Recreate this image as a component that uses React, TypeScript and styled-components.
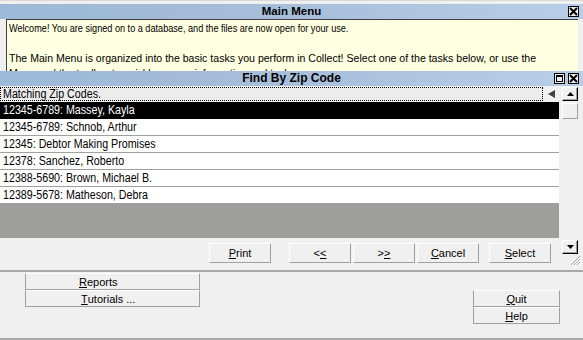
import { FC } from 'react';
import styled, { createGlobalStyle } from 'styled-components';

const GlobalStyle = createGlobalStyle`
    html, body {
        margin: 0;
        padding: 0;
        background: #f0f0f0;
    }
    body {
        font-family: "Liberation Sans", Arial, sans-serif;
        font-size: 11px;
        color: #000;
    }
`;

const Screen = styled.div`
    width: 583px;
    height: 340px;
    overflow: hidden;
    background: #f0f0f0;
    display: flex;
    flex-direction: column;
    padding-top: 3px;
    box-sizing: border-box;
    border-top: 1px solid #d8d8d8;
`;

const TitleBar = styled.div<{ $size?: number }>`
    position: relative;
    height: 15px;
    flex: none;
    background: linear-gradient(90deg, #9cbad8 0%, #a3bbd7 30%, #a9c0dc 55%, #b8cee8 100%);
    display: flex;
    align-items: center;
    justify-content: center;
    font-weight: bold;
    font-size: ${p => p.$size ?? 12}px;
    line-height: 15px;
`;

const TitleButtons = styled.div`
    position: absolute;
    right: 4px;
    top: 2px;
    display: flex;
    gap: 3px;
`;

const WinButton = styled.div`
    width: 11px;
    height: 11px;
    box-sizing: border-box;
    border: 1px solid #000;
    background: #ececec;
    display: flex;
    align-items: center;
    justify-content: center;
`;

const Welcome = styled.div`
    flex: none;
    height: 52px;
    margin: 0 5px 0 6px;
    box-sizing: border-box;
    background: #ffffe1;
    border-left: 1px solid #404040;
    border-top: 1px solid #404040;
    padding: 1px 2px 0 2px;
    overflow: hidden;
`;

const Para = styled.p<{ $scale: number }>`
    margin: 0 0 15px 0;
    width: calc(100% / ${p => p.$scale});
    transform: scaleX(${p => p.$scale});
    transform-origin: left top;
    line-height: 15px;
    white-space: nowrap;
`;

const FindBody = styled.div`
    flex: none;
    display: flex;
    height: 183px;
`;

const ListColumn = styled.div`
    width: 559px;
    display: flex;
    flex-direction: column;
`;

const HeaderRow = styled.div`
    display: flex;
    align-items: center;
    height: 14px;
    margin-top: 1px;
    margin-bottom: 1px;
`;

const HeaderLabel = styled.div`
    flex: 1;
    height: 14px;
    box-sizing: border-box;
    border: 1px dotted #000;
    background: #ececec;
    padding-left: 2px;
    line-height: 12px;
    font-size: 12px;
`;

const Narrow = styled.span`
    display: inline-block;
    transform: scaleX(0.89);
    transform-origin: left center;
    white-space: nowrap;
`;

const SortArrow = styled.div`
    width: 16px;
    display: flex;
    justify-content: center;
`;

const Row = styled.div<{ $selected?: boolean }>`
    height: 17px;
    box-sizing: border-box;
    border-bottom: 1px solid ${p => (p.$selected ? '#000' : '#a0a0a0')};
    background: ${p => (p.$selected ? '#000' : '#fff')};
    color: ${p => (p.$selected ? '#fff' : '#000')};
    padding-left: 3px;
    font-size: 12px;
    line-height: 16px;
`;

const Filler = styled.div`
    height: 34px;
    background: #9e9f9c;
`;

const ButtonBar = styled.div`
    flex: 1;
    display: flex;
    align-items: flex-start;
    padding: 5px 0 0 209px;
`;

const Btn = styled.div<{ $w?: number; $ml?: number }>`
    width: ${p => p.$w ?? 62}px;
    height: 20px;
    margin-left: ${p => p.$ml ?? 0}px;
    box-sizing: border-box;
    border: 1px solid;
    border-color: #fff #a0a0a0 #a0a0a0 #fff;
    background: #f0f0f0;
    display: flex;
    align-items: center;
    justify-content: center;
    font-size: 11px;

    u {
        text-decoration: underline;
        text-underline-offset: 1px;
    }
`;

const StackBtn = styled(Btn)<{ $left?: number }>`
    height: 17px;
    border-color: #fff #a0a0a0 #a0a0a0 #a0a0a0;
    justify-content: ${p => (p.$left !== undefined ? 'flex-start' : 'center')};
    padding-left: ${p => p.$left ?? 0}px;
`;

const ScrollColumn = styled.div`
    flex: 1;
    display: flex;
    flex-direction: column;
    align-items: flex-start;
    padding: 1px 0 0 3px;
`;

const ScrollBtn = styled.div`
    width: 16px;
    height: 14px;
    box-sizing: border-box;
    border: 1px solid;
    border-color: #fff #000 #000 #fff;
    box-shadow: inset -1px -1px #a0a0a0;
    background: #f0f0f0;
    display: flex;
    align-items: center;
    justify-content: center;
`;

const Thumb = styled.div`
    width: 16px;
    height: 16px;
    margin-top: 2px;
    box-sizing: border-box;
    border: 1px solid;
    border-color: #fff #a0a0a0 #a0a0a0 #fff;
    background: #f0f0f0;
`;

const ScrollSpacer = styled.div`
    flex: 1;
`;

const Grip = styled.div`
    align-self: flex-end;
    margin: 1px 2px 3px 0;
    width: 11px;
    height: 11px;
`;

const Separator = styled.div`
    flex: none;
    height: 2px;
    background: #a9a9a9;
    margin-top: 1px;
`;

const Bottom = styled.div`
    flex: 1;
    display: flex;
    justify-content: space-between;
    padding: 1px 23px 0 25px;
    border-bottom: 2px solid #a9a9a9;
`;

const Stack = styled.div<{ $top?: number }>`
    display: flex;
    flex-direction: column;
    padding-top: ${p => p.$top ?? 0}px;
`;

const rows = [
    '12345-6789: Massey, Kayla',
    '12345-6789: Schnob, Arthur',
    '12345: Debtor Making Promises',
    '12378: Sanchez, Roberto',
    '12388-5690: Brown, Michael B.',
    '12389-5678: Matheson, Debra',
];

const CloseIcon = () => (
    <svg width="9" height="9" viewBox="0 0 9 9">
        <path d="M1 1 L8 8 M8 1 L1 8" stroke="#000" strokeWidth="2" />
    </svg>
);

export const App: FC = () => {
    return (
        <Screen>
            <GlobalStyle />
            <TitleBar $size={11.5}>
                Main Menu
                <TitleButtons>
                    <WinButton><CloseIcon /></WinButton>
                </TitleButtons>
            </TitleBar>
            <Welcome>
                <Para $scale={0.83}>Welcome! You are signed on to a database, and the files are now open for your use.</Para>
                <Para $scale={0.96}>
                    The Main Menu is organized into the basic tasks you perform in Collect! Select one of the tasks below, or use the<br />
                    Menu and the toolbar to quickly access information and tasks.
                </Para>
            </Welcome>
            <TitleBar>
                Find By Zip Code
                <TitleButtons>
                    <WinButton>
                        <svg width="7" height="7" viewBox="0 0 7 7">
                            <rect x="0.5" y="0.5" width="6" height="6" fill="none" stroke="#000" />
                            <rect x="0" y="0" width="7" height="2" fill="#000" />
                        </svg>
                    </WinButton>
                    <WinButton><CloseIcon /></WinButton>
                </TitleButtons>
            </TitleBar>
            <FindBody>
                <ListColumn>
                    <HeaderRow>
                        <HeaderLabel><Narrow>Matching Zip Codes.</Narrow></HeaderLabel>
                        <SortArrow>
                            <svg width="7" height="8" viewBox="0 0 7 8">
                                <path d="M0 4 L7 0 L7 8 Z" fill="#404040" />
                            </svg>
                        </SortArrow>
                    </HeaderRow>
                    {rows.map((r, i) => (
                        <Row key={r} $selected={i === 0}><Narrow>{r}</Narrow></Row>
                    ))}
                    <Filler />
                    <ButtonBar>
                        <Btn><u>P</u>rint</Btn>
                        <Btn $ml={18}>&lt;<u>&lt;</u></Btn>
                        <Btn $ml={2}>&gt;<u>&gt;</u></Btn>
                        <Btn $ml={2}><u>C</u>ancel</Btn>
                        <Btn $ml={10}><u>S</u>elect</Btn>
                    </ButtonBar>
                </ListColumn>
                <ScrollColumn>
                    <ScrollBtn>
                        <svg width="7" height="4" viewBox="0 0 7 4">
                            <path d="M3.5 0 L7 4 L0 4 Z" fill="#000" />
                        </svg>
                    </ScrollBtn>
                    <Thumb />
                    <ScrollSpacer />
                    <ScrollBtn>
                        <svg width="7" height="4" viewBox="0 0 7 4">
                            <path d="M0 0 L7 0 L3.5 4 Z" fill="#000" />
                        </svg>
                    </ScrollBtn>
                    <Grip>
                        <svg width="11" height="11" viewBox="0 0 11 11">
                            <path d="M10 1 L1 10 M10 4 L4 10 M10 7 L7 10" stroke="#a0a0a0" strokeWidth="1" />
                            <path d="M11 2 L2 11 M11 5 L5 11 M11 8 L8 11" stroke="#fff" strokeWidth="1" />
                        </svg>
                    </Grip>
                </ScrollColumn>
            </FindBody>
            <Separator />
            <Bottom>
                <Stack>
                    <StackBtn $w={175} $left={53}><u>R</u>eports</StackBtn>
                    <StackBtn $w={175} $left={55}><u>T</u>utorials ...</StackBtn>
                </Stack>
                <Stack $top={17}>
                    <StackBtn $w={87}><u>Q</u>uit</StackBtn>
                    <StackBtn $w={87}><u>H</u>elp</StackBtn>
                </Stack>
            </Bottom>
        </Screen>
    );
};

export default App;
